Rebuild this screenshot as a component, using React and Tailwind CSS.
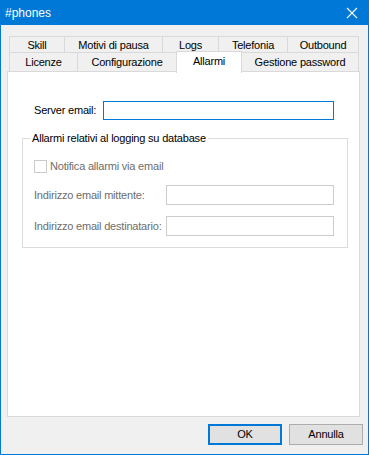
import React from "react";

const font = { fontFamily: '"Liberation Sans", Arial, sans-serif' };
const txt = "text-[11px] tracking-[-0.2px] leading-none whitespace-nowrap";

function Tab({ w, children, first }) {
  return (
    <div
      className={`h-[17px] ${first ? "" : "-ml-px"} border border-b-0 border-[#d9d9d9] bg-[#f0f0f0] flex items-center justify-center text-black ${txt}`}
      style={{ width: w }}
    >
      {children}
    </div>
  );
}

function Tab2({ w, children, first, selected }) {
  if (selected) {
    return (
      <div
        className={`relative z-10 -ml-px -mt-px -mb-px h-[22px] border border-b-0 border-[#d9d9d9] bg-white flex items-center justify-center text-black pb-[2px] ${txt}`}
        style={{ width: w }}
      >
        {children}
      </div>
    );
  }
  return (
    <div
      className={`h-[20px] ${first ? "" : "-ml-px"} border border-b-0 border-[#d9d9d9] bg-[#f0f0f0] flex items-center justify-center text-black ${txt}`}
      style={{ width: w }}
    >
      {children}
    </div>
  );
}

export default function App() {
  return (
    <div
      className="w-[369px] h-[455px] bg-[#f0f0f0] border-x border-b border-[#0078d7] flex flex-col box-border"
      style={font}
    >
      <div className="h-[25px] -mx-px bg-[#0078d7] flex items-center justify-between pl-[5px] pr-[11px] shrink-0">
        <span className="text-white text-[12px] leading-none">#phones</span>
        <svg width="12" height="12" viewBox="0 0 12 12">
          <path d="M1 1 L11 11 M11 1 L1 11" stroke="white" strokeWidth="1.1" />
        </svg>
      </div>

      <div className="mt-[11px] ml-[8px] flex flex-col">
        <div className="flex">
          <Tab w={56} first>Skill</Tab>
          <Tab w={99}>Motivi di pausa</Tab>
          <Tab w={57}>Logs</Tab>
          <Tab w={70}>Telefonia</Tab>
          <Tab w={72}>Outbound</Tab>
        </div>
        <div className="flex -mt-px">
          <Tab2 w={69} first>Licenze</Tab2>
          <Tab2 w={100}>Configurazione</Tab2>
          <Tab2 w={66} selected>Allarmi</Tab2>
          <Tab2 w={118}>Gestione password</Tab2>
        </div>
      </div>

      <div className="ml-[6px] w-[353px] h-[346px] -mt-px border border-[#d9d9d9] bg-white relative">
        <div className="flex items-center mt-[29px] ml-[26px]">
          <span className={`text-black w-[69px] shrink-0 ${txt}`}>Server email:</span>
          <div className="w-[231px] h-[19px] border border-[#0078d7] bg-white shrink-0" />
        </div>

        <div className="relative mt-[18px] ml-[14px] w-[326px] h-[110px] border border-[#dcdcdc]">
          <span className={`absolute -top-[6px] left-[7px] bg-white px-[2px] text-black ${txt}`}>
            Allarmi relativi al logging su database
          </span>
          <div className="flex items-center mt-[21px] ml-[11px]">
            <div className="w-[13px] h-[13px] border border-[#cccccc] bg-white shrink-0" />
            <span className={`ml-[3px] text-[#6d6d6d] ${txt}`}>Notifica allarmi via email</span>
          </div>
          <div className="flex items-center mt-[12px] ml-[11px]">
            <span className={`w-[132px] shrink-0 text-[#6d6d6d] ${txt}`}>Indirizzo email mittente:</span>
            <div className="w-[168px] h-[20px] border border-[#cccccc] bg-white shrink-0" />
          </div>
          <div className="flex items-center mt-[11px] ml-[11px]">
            <span className={`w-[132px] shrink-0 text-[#6d6d6d] ${txt}`}>Indirizzo email destinatario:</span>
            <div className="w-[168px] h-[20px] border border-[#cccccc] bg-white shrink-0" />
          </div>
        </div>
      </div>

      <div className="flex justify-end gap-[7px] mt-[7px] mr-[5px]">
        <div className={`w-[74px] h-[21px] border-2 border-[#0078d7] bg-[#e1e1e1] flex items-center justify-center text-black ${txt}`}>
          OK
        </div>
        <div className={`w-[74px] h-[21px] border border-[#adadad] bg-[#e1e1e1] flex items-center justify-center text-black ${txt}`}>
          Annulla
        </div>
      </div>
    </div>
  );
}
